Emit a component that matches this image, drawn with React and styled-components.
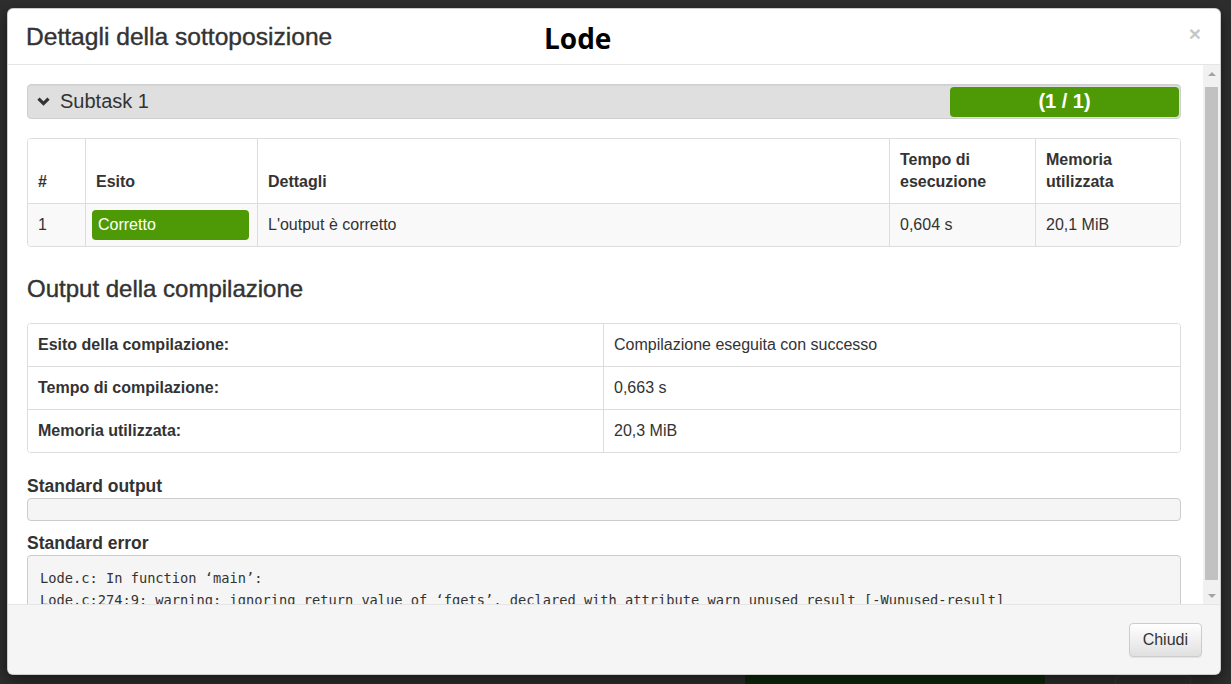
import React from 'react';
import styled, { createGlobalStyle } from 'styled-components';

const GlobalStyle = createGlobalStyle`
  html, body { margin: 0; padding: 0; overflow: hidden; }
  body {
    background: #2e2e2e;
    font-family: "Liberation Sans", Arial, sans-serif;
    color: #333;
  }
  * { box-sizing: border-box; }
`;

const Backdrop = styled.div`
  position: relative;
  width: 1231px;
  height: 684px;
  background: #2e2e2e;
  overflow: hidden;
`;

const BehindPage = styled.div`
  padding: 675px 0 0 745px;
  display: flex;
  gap: 70px;
`;

const BehindButton = styled.div`
  width: 300px;
  height: 20px;
  background: #0e280b;
`;

const BehindBox = styled.div`
  width: 76px;
  height: 20px;
  border: 1px solid #3a3a3a;
  border-radius: 4px;
`;

const Modal = styled.div`
  position: absolute;
  top: 8px;
  left: 7px;
  width: 1214px;
  height: 667px;
  background: #fff;
  border: 1px solid rgba(0, 0, 0, 0.2);
  border-radius: 6px;
  box-shadow: 0 5px 15px rgba(0, 0, 0, 0.5);
  display: flex;
  flex-direction: column;
  overflow: hidden;
`;

const Header = styled.div`
  height: 56px;
  flex: none;
  display: grid;
  grid-template-columns: 518px auto 1fr auto;
  align-items: center;
  padding: 0 19px 0 18px;
  border-bottom: 1px solid #e5e5e5;
`;

const Title = styled.h4`
  margin: 0;
  font-size: 24.6px;
  font-weight: normal;
  line-height: 1.1;
  color: #333;
  white-space: nowrap;
  -webkit-text-stroke: 0.4px #333;
`;

const Badge = styled.div`
  font-family: "Open Sans", "Noto Sans", sans-serif;
  font-weight: 700;
  font-size: 28px;
  line-height: 1;
  color: #000;
  margin-top: 2px;
`;

const Close = styled.button`
  grid-column: 4;
  background: none;
  border: 0;
  padding: 0;
  font-family: "Liberation Sans", Arial, sans-serif;
  font-size: 21px;
  font-weight: bold;
  line-height: 1;
  color: #000;
  opacity: 0.22;
  margin-top: -7px;
`;

const Body = styled.div`
  flex: 1;
  min-height: 0;
  display: flex;
`;

const Content = styled.div`
  flex: 1;
  min-width: 0;
  overflow: hidden;
  padding: 19px 22px 0 19px;
  display: flex;
  flex-direction: column;
`;

const ScrollTrack = styled.div`
  width: 17px;
  flex: none;
  background: #f1f1f1;
  display: flex;
  flex-direction: column;
`;

const ScrollButton = styled.div`
  height: 17px;
  flex: none;
  display: flex;
  align-items: center;
  justify-content: center;
`;

const ScrollThumb = styled.div`
  margin: 5px 2px 0 2px;
  height: 493px;
  background: #c1c1c1;
`;

const ScrollSpacer = styled.div`
  flex: 1;
`;

const SubtaskBar = styled.div`
  height: 35px;
  flex: none;
  display: flex;
  align-items: center;
  padding: 0 1px 0 9px;
  background: #dfdfdf;
  border: 1px solid #cfcfcf;
  border-radius: 4px;
  box-shadow: inset 0 1px 1px rgba(0, 0, 0, 0.05);
`;

const SubtaskName = styled.span`
  margin-left: 10px;
  font-size: 20px;
  color: #333;
`;

const ScoreBadge = styled.div`
  margin-left: auto;
  width: 229px;
  height: 30px;
  background: #4e9a06;
  border-radius: 4px;
  color: #fff;
  font-weight: bold;
  font-size: 20px;
  display: flex;
  align-items: center;
  justify-content: center;
`;

const Table = styled.div`
  display: grid;
  grid-template-columns: ${(p) => p.$cols};
  margin-top: ${(p) => p.$mt || 0}px;
  border: 1px solid #ddd;
  border-radius: 4px;
  overflow: hidden;
  font-size: 16px;
  line-height: 22px;
  flex: none;
`;

const Cell = styled.div`
  display: flex;
  align-items: ${(p) => (p.$head ? 'flex-end' : 'center')};
  padding: ${(p) => p.$pad || '10px'};
  border-left: ${(p) => (p.$first ? 'none' : '1px solid #ddd')};
  border-top: ${(p) => (p.$top ? 'none' : '1px solid #ddd')};
  background: ${(p) => p.$bg || '#fff'};
  font-weight: ${(p) => (p.$bold ? 'bold' : 'normal')};
  color: #333;
`;

const Outcome = styled.div`
  flex: 1;
  height: 30px;
  line-height: 30px;
  padding-left: 6px;
  background: #4e9a06;
  color: #fff;
  border-radius: 4px;
  font-size: 16px;
`;

const SectionTitle = styled.h3`
  margin: 29px 0 21px;
  font-size: 24px;
  font-weight: normal;
  line-height: 26px;
  color: #333;
  flex: none;
  -webkit-text-stroke: 0.4px #333;
`;

const StreamTitle = styled.h5`
  margin: ${(p) => p.$mt}px 0 2px;
  font-size: 17.5px;
  font-weight: bold;
  line-height: 19px;
  color: #333;
  flex: none;
`;

const Pre = styled.pre`
  margin: 0;
  flex: none;
  min-height: 23px;
  padding: 11px 12px;
  background: #f5f5f5;
  border: 1px solid #ccc;
  border-radius: 4px;
  font-family: "DejaVu Sans Mono", "Liberation Mono", monospace;
  font-size: 13.7px;
  line-height: 22px;
  color: #333;
  white-space: pre;
  overflow: hidden;
`;

const EmptyPre = styled(Pre)`
  height: 23px;
  padding: 0;
`;

const Footer = styled.div`
  height: 70px;
  flex: none;
  display: flex;
  align-items: center;
  justify-content: flex-end;
  padding: 0 18px;
  background: #f5f5f5;
  border-top: 1px solid #e5e5e5;
`;

const Button = styled.button`
  height: 34px;
  padding: 0 13px;
  font-family: "Liberation Sans", Arial, sans-serif;
  font-size: 16px;
  color: #333;
  background: linear-gradient(to bottom, #ffffff 0%, #e0e0e0 100%);
  border: 1px solid #ccc;
  border-radius: 4px;
  box-shadow: inset 0 1px 0 rgba(255, 255, 255, 0.15), 0 1px 1px rgba(0, 0, 0, 0.075);
  margin-top: 1px;
`;

const Chevron = () => (
  <svg width="13" height="9" viewBox="0 0 13 9">
    <path d="M1.5 1.6 L6.5 6.6 L11.5 1.6" fill="none" stroke="#333" strokeWidth="3.2" />
  </svg>
);

const Arrow = ({ up }) => (
  <svg width="8" height="4" viewBox="0 0 8 4">
    <path d={up ? 'M0 4 L4 0 L8 4 Z' : 'M0 0 L8 0 L4 4 Z'} fill="#a3a3a3" />
  </svg>
);

const compile = [
  ['Esito della compilazione:', 'Compilazione eseguita con successo'],
  ['Tempo di compilazione:', '0,663 s'],
  ['Memoria utilizzata:', '20,3 MiB'],
];

const stderr = `Lode.c: In function \u2018main\u2019:
Lode.c:274:9: warning: ignoring return value of \u2018fgets\u2019, declared with attribute warn_unused_result [-Wunused-result]
  274 |         fgets(s, sizeof s, stdin);
      |         ^~~~~~~~~~~~~~~~~~~~~~~~~`;

export default function App() {
  return (
    <>
      <GlobalStyle />
      <Backdrop>
        <BehindPage>
          <BehindButton />
          <BehindBox />
        </BehindPage>
        <Modal>
          <Header>
            <Title>Dettagli della sottoposizione</Title>
            <Badge>Lode</Badge>
            <Close aria-label="Chiudi">×</Close>
          </Header>
          <Body>
            <Content>
              <SubtaskBar>
                <Chevron />
                <SubtaskName>Subtask 1</SubtaskName>
                <ScoreBadge>(1 / 1)</ScoreBadge>
              </SubtaskBar>

              <Table $cols="57px 172px 1fr 146px 145px" $mt={19}>
                <Cell $head $first $top $bold>#</Cell>
                <Cell $head $top $bold>Esito</Cell>
                <Cell $head $top $bold>Dettagli</Cell>
                <Cell $head $top $bold>Tempo di esecuzione</Cell>
                <Cell $head $top $bold>Memoria utilizzata</Cell>
                <Cell $first $bg="#f9f9f9">1</Cell>
                <Cell $bg="#f9f9f9" $pad="6px 8px 6px 6px">
                  <Outcome>Corretto</Outcome>
                </Cell>
                <Cell $bg="#f9f9f9">L'output è corretto</Cell>
                <Cell $bg="#f9f9f9">0,604 s</Cell>
                <Cell $bg="#f9f9f9">20,1 MiB</Cell>
              </Table>

              <SectionTitle>Output della compilazione</SectionTitle>

              <Table $cols="575px 1fr">
                {compile.map(([k, v], i) => (
                  <React.Fragment key={k}>
                    <Cell $first $top={i === 0} $bold>{k}</Cell>
                    <Cell $top={i === 0}>{v}</Cell>
                  </React.Fragment>
                ))}
              </Table>

              <StreamTitle $mt={24}>Standard output</StreamTitle>
              <EmptyPre />

              <StreamTitle $mt={13}>Standard error</StreamTitle>
              <Pre>{stderr}</Pre>
            </Content>
            <ScrollTrack>
              <ScrollButton><Arrow up /></ScrollButton>
              <ScrollThumb />
              <ScrollSpacer />
              <ScrollButton><Arrow /></ScrollButton>
            </ScrollTrack>
          </Body>
          <Footer>
            <Button>Chiudi</Button>
          </Footer>
        </Modal>
      </Backdrop>
    </>
  );
}
